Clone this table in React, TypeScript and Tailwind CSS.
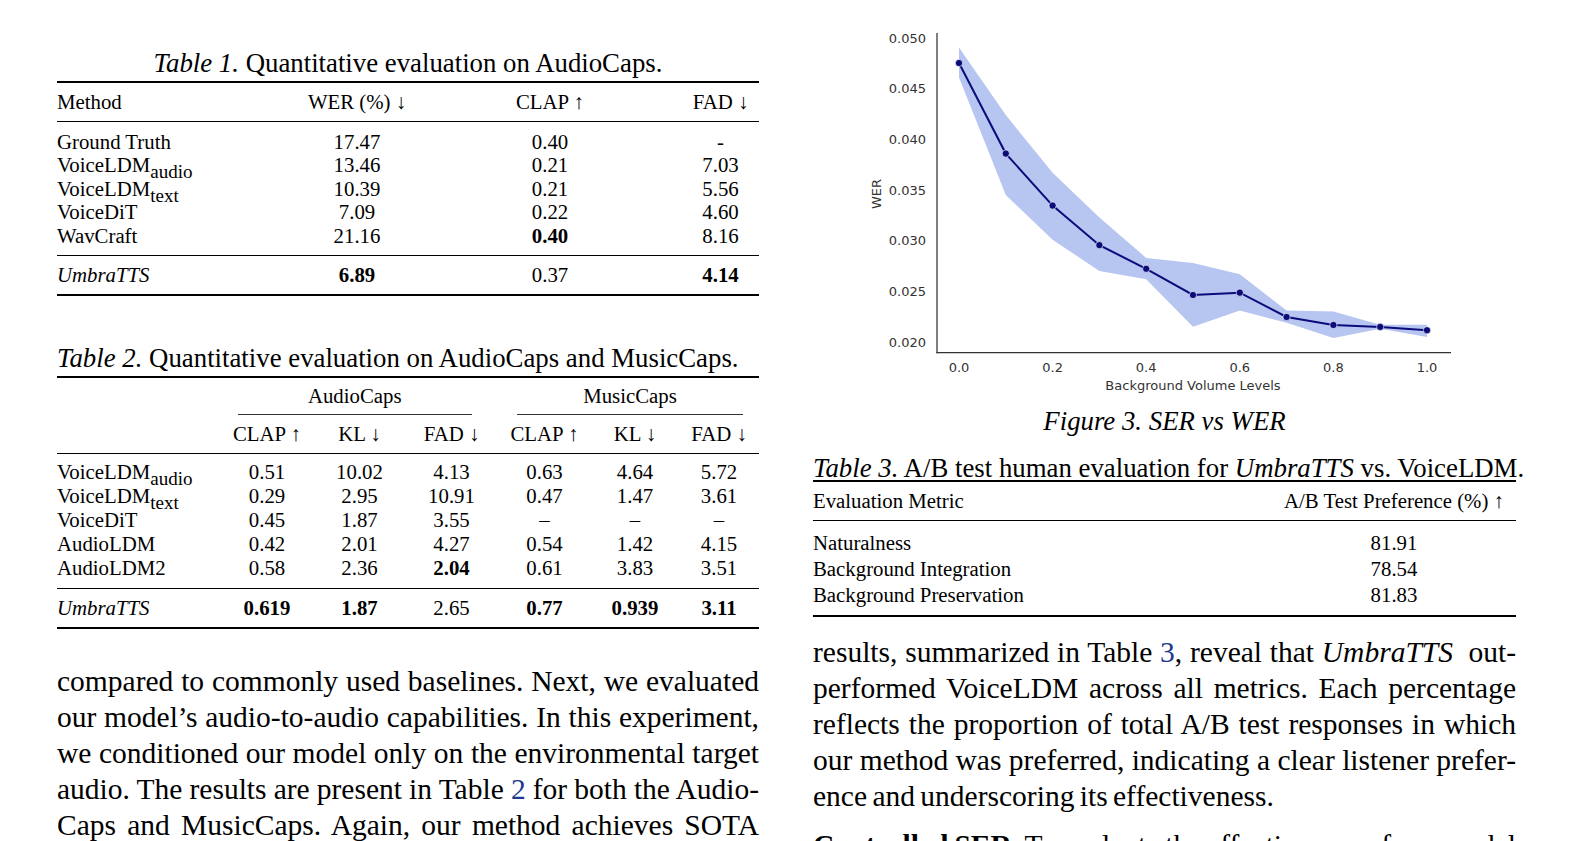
import type { ReactNode } from "react";

// t, mean, lower, upper
const series: [number, number, number, number][] = [
  [0.0, 0.04754, 0.04612, 0.04908],
  [0.1, 0.0386, 0.0345, 0.0424],
  [0.2, 0.03347, 0.0301, 0.0367],
  [0.3, 0.02956, 0.027, 0.0323],
  [0.4, 0.02723, 0.0262, 0.0283],
  [0.5, 0.02464, 0.0215, 0.0278],
  [0.6, 0.02487, 0.0231, 0.0267],
  [0.7, 0.02247, 0.0219, 0.0231],
  [0.8, 0.02168, 0.0204, 0.023],
  [0.9, 0.02149, 0.0213, 0.0217],
  [1.0, 0.02116, 0.0205, 0.0217],
];

const X = (t: number) => 959 + t * 468;
const Y = (v: number) => 342 - ((v - 0.02) / 0.005) * 50.65;

function Chart() {
  const line = series.map(([t, v]) => `${X(t)},${Y(v)}`).join(" ");
  const band = [
    ...series.map(([t, , , hi]) => `${X(t)},${Y(hi)}`),
    ...[...series].reverse().map(([t, , lo]) => `${X(t)},${Y(lo)}`),
  ].join(" ");
  const yTicks = [0.05, 0.045, 0.04, 0.035, 0.03, 0.025, 0.02];
  const xTicks = [0, 0.2, 0.4, 0.6, 0.8, 1.0];

  return (
    <svg width={703} height={400} viewBox="813 0 703 400" className="block">
      <polygon points={band} fill="#b7c5f1" />
      <polyline points={line} fill="none" stroke="#0b0b7a" strokeWidth={2} />
      {series.map(([t, v]) => (
        <circle key={t} cx={X(t)} cy={Y(v)} r={3.6} fill="#0b0b7a" stroke="#fff" strokeWidth={0.6} />
      ))}
      <line x1={937} y1={33} x2={937} y2={353.3} stroke="#333" strokeWidth={1.25} />
      <line x1={936.4} y1={352.7} x2={1451} y2={352.7} stroke="#333" strokeWidth={1.25} />
      <g fontFamily="DejaVu Sans, sans-serif" fontSize={13} fill="#333">
        {yTicks.map((v) => (
          <text key={v} x={926} y={Y(v)} textAnchor="end" dominantBaseline="central">
            {v.toFixed(3)}
          </text>
        ))}
        {xTicks.map((t) => (
          <text key={t} x={X(t)} y={367} textAnchor="middle" dominantBaseline="central">
            {t.toFixed(1)}
          </text>
        ))}
        <text x={1193} y={385} textAnchor="middle" dominantBaseline="central">
          Background Volume Levels
        </text>
        <text
          x={876}
          y={194}
          textAnchor="middle"
          dominantBaseline="central"
          transform="rotate(-90 876 194)"
        >
          WER
        </text>
      </g>
    </svg>
  );
}

function Sub({ children }: { children: ReactNode }) {
  return <sub className="text-[19px] bottom-[-6px]">{children}</sub>;
}

function Line({ children, last }: { children: ReactNode; last?: boolean }) {
  return <div className={last ? "text-left" : "text-justify [text-align-last:justify]"}>{children}</div>;
}

function Ref({ children }: { children: ReactNode }) {
  return <span className="text-[#1d3a8f]">{children}</span>;
}

const t1 = [
  ["Ground Truth", "17.47", "0.40", "-"],
  ["VoiceLDM|audio", "13.46", "0.21", "7.03"],
  ["VoiceLDM|text", "10.39", "0.21", "5.56"],
  ["VoiceDiT", "7.09", "0.22", "4.60"],
  ["WavCraft", "21.16", "*0.40", "8.16"],
];

const t2 = [
  ["VoiceLDM|audio", "0.51", "10.02", "4.13", "0.63", "4.64", "5.72"],
  ["VoiceLDM|text", "0.29", "2.95", "10.91", "0.47", "1.47", "3.61"],
  ["VoiceDiT", "0.45", "1.87", "3.55", "–", "–", "–"],
  ["AudioLDM", "0.42", "2.01", "4.27", "0.54", "1.42", "4.15"],
  ["AudioLDM2", "0.58", "2.36", "*2.04", "0.61", "3.83", "3.51"],
];

function Name({ v }: { v: string }) {
  const [a, b] = v.split("|");
  return (
    <>
      {a}
      {b && <Sub>{b}</Sub>}
    </>
  );
}

function Val({ v }: { v: string }) {
  return v.startsWith("*") ? <b>{v.slice(1)}</b> : <>{v}</>;
}

export default function App() {
  return (
    <div className="h-[841px] w-[1573px] overflow-hidden bg-white text-black font-[family-name:'Liberation_Serif','Times_New_Roman',serif]">
      <div className="flex gap-[54px] pl-[57px]">
        {/* left column */}
        <div className="w-[702px] shrink-0 pt-[48px]">
          <div className="h-[30px] text-center text-[26.8px] leading-[30px]">
            <i>Table 1.</i> Quantitative evaluation on AudioCaps.
          </div>
          <div className="mt-[3px] h-[2px] bg-black" />
          <div className="text-[20.8px]">
            <div className="grid grid-cols-[213px_174px_212px_103px] h-[38px] leading-[38px]">
              <div>Method</div>
              <div className="text-center">WER (%) ↓</div>
              <div className="text-center">CLAP ↑</div>
              <div className="pl-[26px] text-center">FAD ↓</div>
            </div>
            <div className="h-px bg-black" />
            <div className="pt-[7.5px] pb-[8px]">
              {t1.map((r) => (
                <div key={r[0]} className="grid grid-cols-[213px_174px_212px_103px] h-[23.6px] leading-[23.6px]">
                  <div className="whitespace-nowrap">
                    <Name v={r[0]} />
                  </div>
                  <div className="text-center"><Val v={r[1]} /></div>
                  <div className="text-center"><Val v={r[2]} /></div>
                  <div className="pl-[26px] text-center"><Val v={r[3]} /></div>
                </div>
              ))}
            </div>
            <div className="h-px bg-black" />
            <div className="grid grid-cols-[213px_174px_212px_103px] h-[37.5px] leading-[37.5px]">
              <div><i>UmbraTTS</i></div>
              <div className="text-center"><b>6.89</b></div>
              <div className="text-center">0.37</div>
              <div className="pl-[26px] text-center"><b>4.14</b></div>
            </div>
            <div className="h-[2px] bg-black" />
          </div>

          <div className="mt-[47px] h-[30px] text-[26.8px] leading-[30px] whitespace-nowrap">
            <i>Table 2.</i> Quantitative evaluation on AudioCaps and MusicCaps.
          </div>
          <div className="mt-[3px] h-[2px] bg-black" />
          <div className="text-[20.8px]">
            <div className="grid grid-cols-[163px_94px_91px_93px_93px_88px_80px]">
              <div />
              <div className="col-span-3 ml-[18px] mr-[26.5px]">
                <div className="h-[36.5px] leading-[36.5px] text-center">AudioCaps</div>
                <div className="h-px bg-black/80" />
              </div>
              <div className="col-span-3 ml-[18.6px] mr-[15.6px]">
                <div className="h-[36.5px] leading-[36.5px] text-center">MusicCaps</div>
                <div className="h-px bg-black/80" />
              </div>
            </div>
            <div className="grid grid-cols-[163px_94px_91px_93px_93px_88px_80px] h-[38px] leading-[38px] text-center">
              <div />
              <div>CLAP ↑</div>
              <div>KL ↓</div>
              <div>FAD ↓</div>
              <div>CLAP ↑</div>
              <div>KL ↓</div>
              <div>FAD ↓</div>
            </div>
            <div className="h-px bg-black" />
            <div className="pt-[6px] pb-[8px]">
              {t2.map((r) => (
                <div key={r[0]} className="grid grid-cols-[163px_94px_91px_93px_93px_88px_80px] h-[24px] leading-[24px]">
                  <div className="whitespace-nowrap">
                    <Name v={r[0]} />
                  </div>
                  {r.slice(1).map((c, i) => (
                    <div key={i} className="text-center">
                      <Val v={c} />
                    </div>
                  ))}
                </div>
              ))}
            </div>
            <div className="h-px bg-black" />
            <div className="grid grid-cols-[163px_94px_91px_93px_93px_88px_80px] h-[37.5px] leading-[37.5px] text-center">
              <div className="text-left"><i>UmbraTTS</i></div>
              <div><b>0.619</b></div>
              <div><b>1.87</b></div>
              <div>2.65</div>
              <div><b>0.77</b></div>
              <div><b>0.939</b></div>
              <div><b>3.11</b></div>
            </div>
            <div className="h-[2px] bg-black" />
          </div>

          <div className="mt-[34px] text-[29.5px] leading-[36px] [word-spacing:-2px]">
            <Line>compared to commonly used baselines. Next, we evaluated</Line>
            <Line>our model’s audio-to-audio capabilities. In this experiment,</Line>
            <Line>we conditioned our model only on the environmental target</Line>
            <Line>
              audio. The results are present in Table <Ref>2</Ref> for both the Audio-
            </Line>
            <Line>Caps and MusicCaps. Again, our method achieves SOTA</Line>
          </div>
        </div>

        {/* right column */}
        <div className="w-[703px] shrink-0">
          <Chart />
          <div className="mt-[6px] h-[30px] text-center text-[26.8px] leading-[30px] italic">
            Figure 3. SER vs WER
          </div>

          <div className="mt-[19.5px] h-[24px] text-[26.8px] leading-[24px] whitespace-nowrap">
            <i>Table 3.</i> A/B test human evaluation for <i>UmbraTTS</i> vs. VoiceLDM.
          </div>
          <div className="h-[2px] bg-black" />
          <div className="text-[20.8px]">
            <div className="grid grid-cols-[459px_244px] h-[38.5px] leading-[38.5px]">
              <div>Evaluation Metric</div>
              <div className="text-center">A/B Test Preference (%) ↑</div>
            </div>
            <div className="h-px bg-black" />
            <div className="pt-[8.5px] pb-[7px]">
              {[
                ["Naturalness", "81.91"],
                ["Background Integration", "78.54"],
                ["Background Preservation", "81.83"],
              ].map(([a, b]) => (
                <div key={a} className="grid grid-cols-[459px_244px] h-[26.1px] leading-[26.1px]">
                  <div>{a}</div>
                  <div className="text-center">{b}</div>
                </div>
              ))}
            </div>
            <div className="h-[2px] bg-black" />
          </div>

          <div className="mt-[17px] text-[29.5px] leading-[36px] [word-spacing:-2px]">
            <Line>
              results, summarized in Table <Ref>3</Ref>, reveal that <i>UmbraTTS</i>&nbsp; out-
            </Line>
            <Line>performed VoiceLDM across all metrics. Each percentage</Line>
            <Line>reflects the proportion of total A/B test responses in which</Line>
            <Line>our method was preferred, indicating a clear listener prefer-</Line>
            <Line last>ence and underscoring its effectiveness.</Line>
            <div className="mt-[13px]">
              <Line>
                <b>Controlled SER.</b> To evaluate the effectiveness of our model
              </Line>
            </div>
          </div>
        </div>
      </div>
    </div>
  );
}
